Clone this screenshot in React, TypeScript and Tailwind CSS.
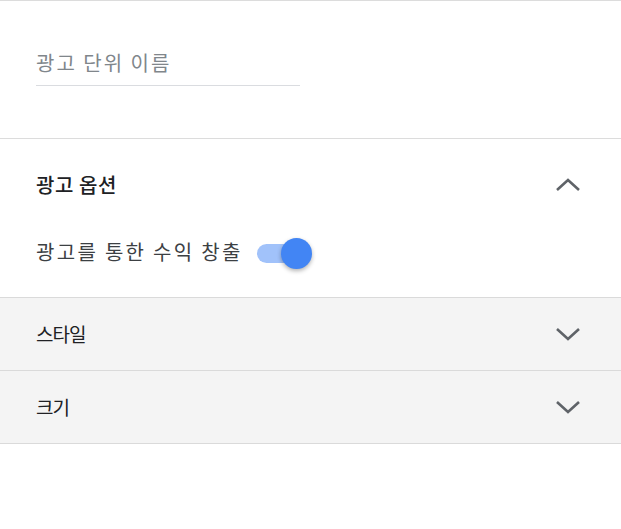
import React from "react";

function Chevron({ up = false }: { up?: boolean }) {
  return (
    <svg width="26" height="16" viewBox="0 0 26 16" className="shrink-0">
      <polyline
        points={up ? "2,13 13,3 24,13" : "2,3 13,13 24,3"}
        fill="none"
        stroke="#5f6368"
        strokeWidth="2.6"
      />
    </svg>
  );
}

function Toggle() {
  return (
    <div className="relative h-[32px] w-[56px] shrink-0">
      <div className="absolute left-0 top-[8px] h-[19px] w-[46px] rounded-full bg-[#a1c2fa]" />
      <div className="absolute left-[24px] top-[2px] h-[31px] w-[31px] rounded-full bg-[#4285f4] shadow-[0_2px_4px_rgba(0,0,0,0.3)]" />
    </div>
  );
}

function CollapsedRow({ label }: { label: string }) {
  return (
    <div className="flex h-[73px] items-center justify-between border-b border-[#dadada] bg-[#f4f4f4] pl-9 pr-[40px]">
      <span className="text-[19px] leading-[26px] tracking-[-1px] text-[#202124]">{label}</span>
      <Chevron />
    </div>
  );
}

export default function App() {
  return (
    <div className="min-h-[529px] w-[621px] bg-white font-['Noto_Sans_CJK_KR','Noto_Sans',sans-serif]">
      <div className="border-y border-[#dcdcdc] px-9 pb-[52px] pt-[48px]">
        <div className="w-[264px] border-b border-[#dadce0] pb-[8px] text-[20px] leading-[28px] tracking-[2px] text-[#80868b]">
          광고 단위 이름
        </div>
      </div>

      <div className="border-b border-[#dadada]">
        <div className="flex h-[92px] items-center justify-between pl-9 pr-[40px]">
          <span className="text-[20px] font-medium leading-[28px] tracking-[0.6px] text-[#202124]">
            광고 옵션
          </span>
          <Chevron up />
        </div>
        <div className="flex h-[42px] items-center gap-[14px] pl-9">
          <span className="text-[20px] leading-[26px] tracking-[2.3px] text-[#3c4043]">
            광고를 통한 수익 창출
          </span>
          <Toggle />
        </div>
        <div className="h-[24px]" />
      </div>

      <CollapsedRow label="스타일" />
      <CollapsedRow label="크기" />
    </div>
  );
}
